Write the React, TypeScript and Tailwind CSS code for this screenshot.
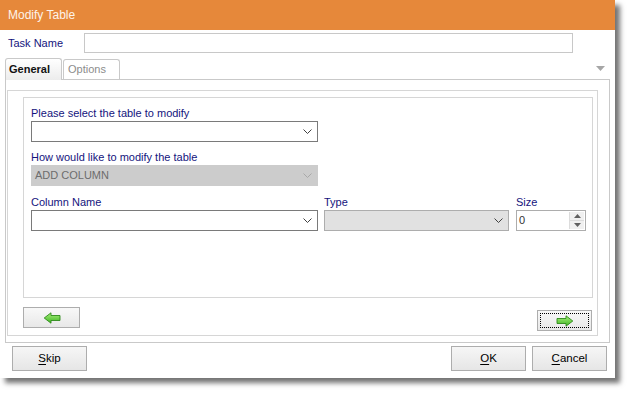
import React from 'react';

const font = { fontFamily: '"Liberation Sans", Arial, sans-serif' };

function Chevron({ disabled = false }: { disabled?: boolean }) {
  return (
    <svg width="9" height="6" viewBox="0 0 9 6" className="shrink-0">
      <polyline
        points="0.5,0.5 4.5,4.5 8.5,0.5"
        fill="none"
        stroke={disabled ? '#a8a8a8' : '#404040'}
        strokeWidth="1"
      />
    </svg>
  );
}

function Select({
  width,
  value = '',
  disabled = false,
  tone = 'white',
}: {
  width: string;
  value?: string;
  disabled?: boolean;
  tone?: 'white' | 'gray' | 'light';
}) {
  const bg =
    tone === 'gray'
      ? 'bg-[#cccccc] border-[#cccccc]'
      : tone === 'light'
        ? 'bg-[#e1e1e1] border-[#adadad]'
        : 'bg-white border-[#7a7a7a]';
  return (
    <div className={`${width} h-[21px] border ${bg} flex items-center justify-between pl-[3px] pr-[5px]`}>
      <span className={`text-[11px] ${disabled ? 'text-[#6d6d6d]' : 'text-black'}`}>{value}</span>
      <Chevron disabled={disabled} />
    </div>
  );
}

function Arrow({ dir }: { dir: 'left' | 'right' }) {
  return (
    <svg width="18" height="12" viewBox="0 0 18 12" style={{ transform: dir === 'left' ? 'scaleX(-1)' : undefined }}>
      <defs>
        <linearGradient id={`g-${dir}`} x1="0" y1="0" x2="0" y2="1">
          <stop offset="0" stopColor="#a8f07a" />
          <stop offset="1" stopColor="#3fb523" />
        </linearGradient>
      </defs>
      <path
        d="M1 3.5 H10 V0.8 L16.8 6 L10 11.2 V8.5 H1 Z"
        fill={`url(#g-${dir})`}
        stroke="#2f8a1c"
        strokeWidth="0.9"
        strokeLinejoin="round"
      />
    </svg>
  );
}

function Label({ children }: { children: React.ReactNode }) {
  return <div className="text-[11px] leading-[15px] text-[#14147d]">{children}</div>;
}

function DlgButton({ first, rest }: { first: string; rest: string }) {
  return (
    <div className="w-[75px] h-[25px] border border-[#adadad] bg-gradient-to-b from-[#f6f6f6] to-[#e6e6e6] flex items-center justify-center text-[11.5px] text-black">
      <span className="underline underline-offset-2">{first}</span>
      {rest}
    </div>
  );
}

export default function App() {
  return (
    <div className="w-[630px] h-[395px] bg-white" style={font}>
      <div className="w-[615px] h-[378px] bg-white flex flex-col shadow-[5px_5px_5px_rgba(0,0,0,0.55)]">
        {/* Title bar */}
        <div className="h-[30px] bg-[#e6883a] flex items-center pl-[8px] text-[12px] text-[#fdf3ea]">
          Modify Table
        </div>

        {/* Task name */}
        <div className="mt-[3px] h-[20px] flex items-center pl-[8px]">
          <div className="w-[76px] text-[11px] text-[#14147d]">Task Name</div>
          <div className="w-[489px] h-[20px] border border-[#c8c8c8] bg-white" />
        </div>

        {/* Tabs */}
        <div className="mt-[5px] h-[21px] flex items-end pl-[5px] pr-[10px] relative">
          <div className="w-[57px] h-[22px] border border-b-0 border-[#c9c9c9] rounded-t-[3px] bg-gradient-to-b from-white to-[#ececec] flex items-center pl-[3px] text-[11px] font-bold text-[#111] relative z-10 -mb-px">
            General
          </div>
          <div className="ml-[1px] w-[57px] h-[20px] border border-b-0 border-[#c9c9c9] rounded-t-[3px] bg-white flex items-center pl-[4px] text-[11px] text-[#8c8c8c]">
            Options
          </div>
          <svg width="9" height="5" viewBox="0 0 9 5" className="absolute right-[10px] top-[8px]">
            <polygon points="0,0 9,0 4.5,5" fill="#a6a6a6" />
          </svg>
        </div>

        {/* Tab panel */}
        <div className="ml-[5px] w-[605px] h-[264px] border border-[#c9c9c9] bg-white flex flex-col">
          <div className="ml-[1px] mt-[10px] w-[591px] h-[246px] border border-[#d6d6d6] flex flex-col">
            <div className="ml-[15px] mt-[6px] w-[570px] h-[201px] border border-[#d6d6d6] flex flex-col pl-[7px] pt-[8px]">
              <Label>Please select the table to modify</Label>
              <Select width="w-[287px]" />

              <div className="mt-[8px]">
                <Label>How would like to modify the table</Label>
              </div>
              <Select width="w-[287px]" value="ADD COLUMN" disabled tone="gray" />

              <div className="mt-[9px] flex gap-[6px]">
                <div className="flex flex-col">
                  <Label>Column Name</Label>
                  <Select width="w-[287px]" />
                </div>
                <div className="flex flex-col">
                  <Label>Type</Label>
                  <Select width="w-[185px]" tone="light" />
                </div>
                <div className="flex flex-col ml-[1px]">
                  <Label>Size</Label>
                  <div className="w-[70px] h-[21px] border border-[#adadad] bg-white flex items-stretch">
                    <span className="flex-1 pl-[2px] text-[11px] leading-[19px] text-[#333]">0</span>
                    <div className="w-[15px] my-[1px] mr-[1px] flex flex-col bg-[#f0f0f0] border-l border-[#dcdcdc]">
                      <div className="flex-1 flex items-center justify-center border-b border-[#dcdcdc]">
                        <svg width="7" height="4" viewBox="0 0 7 4">
                          <polygon points="0,4 7,4 3.5,0" fill="#606060" />
                        </svg>
                      </div>
                      <div className="flex-1 flex items-center justify-center">
                        <svg width="7" height="4" viewBox="0 0 7 4">
                          <polygon points="0,0 7,0 3.5,4" fill="#606060" />
                        </svg>
                      </div>
                    </div>
                  </div>
                </div>
              </div>
            </div>

            {/* Wizard nav */}
            <div className="ml-[15px] mr-[5px] mt-[9px] flex justify-between items-start">
              <div className="w-[57px] h-[21px] border border-[#adadad] bg-gradient-to-b from-[#f8f8f8] to-[#e8e8e8] flex items-center justify-center">
                <Arrow dir="left" />
              </div>
              <div className="mt-[3px] w-[55px] h-[21px] border border-[#adadad] bg-gradient-to-b from-[#f8f8f8] to-[#e8e8e8] p-[2px]">
                <div className="w-full h-full border border-dotted border-black flex items-center justify-center">
                  <Arrow dir="right" />
                </div>
              </div>
            </div>
          </div>
        </div>

        {/* Dialog buttons */}
        <div className="mt-[3px] flex items-center pl-[12px] pr-[8px]">
          <DlgButton first="S" rest="kip" />
          <div className="flex-1" />
          <DlgButton first="O" rest="K" />
          <div className="w-[6px]" />
          <DlgButton first="C" rest="ancel" />
        </div>
      </div>
    </div>
  );
}
